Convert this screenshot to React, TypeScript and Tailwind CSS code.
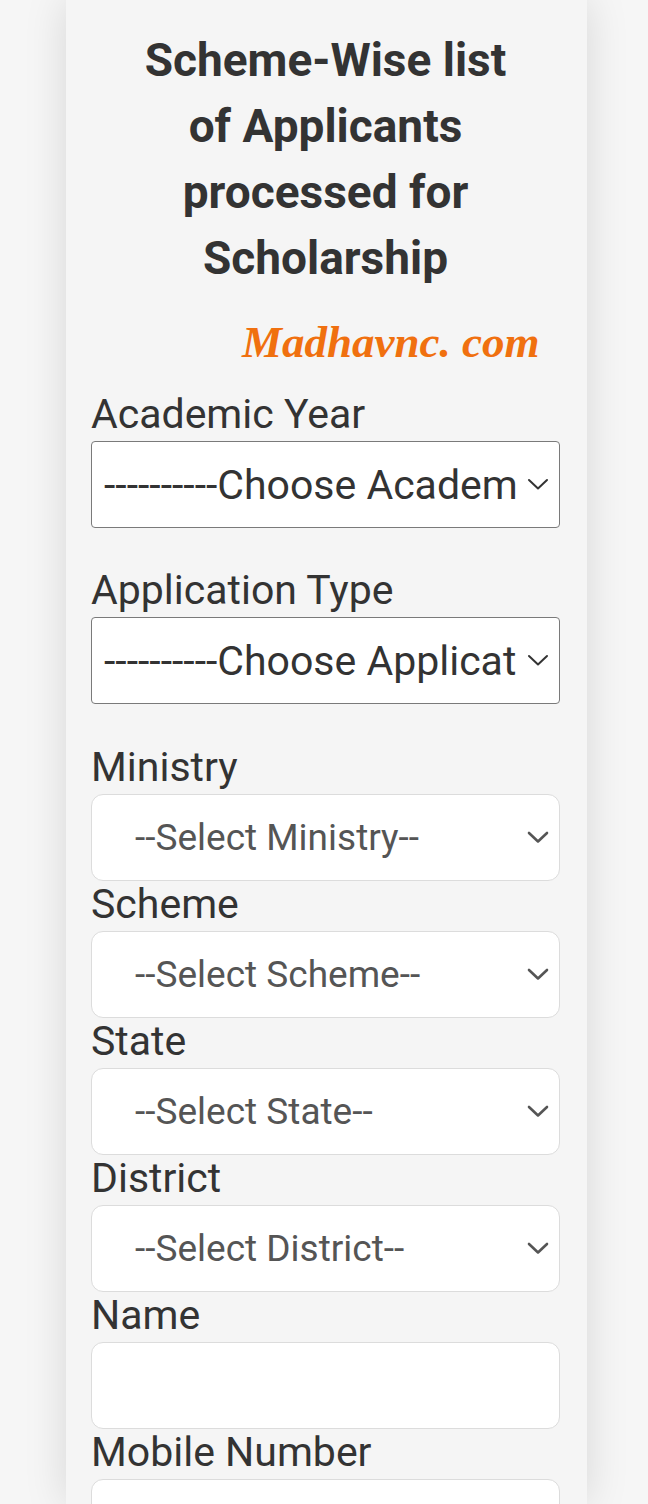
import React from 'react';

const Chevron: React.FC<{ light?: boolean }> = ({ light }) => (
  <svg
    width="22"
    height="13"
    viewBox="0 0 22 13"
    className="mr-[10px] shrink-0"
    fill="none"
    stroke={light ? '#555555' : '#333333'}
    strokeWidth={light ? 2.6 : 2}
    strokeLinecap="round"
    strokeLinejoin="round"
  >
    <polyline points="2,2 11,10.5 20,2" />
  </svg>
);

const DarkSelect: React.FC<{ text: string }> = ({ text }) => (
  <div className="mt-1 flex h-[87px] items-center rounded-[4px] border border-[#7a7a7a] bg-white">
    <div className="ml-[12px] mr-[11px] flex-1 overflow-hidden whitespace-nowrap text-[41px] leading-[48px] text-[#333]">{text}</div>
    <Chevron />
  </div>
);

const LightSelect: React.FC<{ text: string }> = ({ text }) => (
  <div className="mt-1 flex h-[87px] items-center rounded-[12px] border border-[#dcdcdc] bg-white">
    <div className="ml-[43px] flex-1 overflow-hidden whitespace-nowrap text-[37px] text-[#555]">{text}</div>
    <Chevron light />
  </div>
);

const Label: React.FC<{ children: React.ReactNode }> = ({ children }) => (
  <div className="text-[41px] leading-[46px] text-[#333]">{children}</div>
);

export default function App() {
  const selects = [
    { label: 'Ministry', text: '--Select Ministry--' },
    { label: 'Scheme', text: '--Select Scheme--' },
    { label: 'State', text: '--Select State--' },
    { label: 'District', text: '--Select District--' },
  ];

  return (
    <div className="h-[1504px] overflow-hidden bg-[#f6f6f6]" style={{ fontFamily: 'Roboto, "Noto Sans", sans-serif' }}>
      <div className="ml-[66px] h-[1504px] w-[521px] bg-[#f5f5f5] pl-[25px] pr-[27px] pt-[27px] shadow-[0_0_40px_rgba(0,0,0,0.13)]">
        <h1 className="text-center text-[46px] font-bold leading-[66px] text-[#333]">
          Scheme-Wise list
          <br />
          of Applicants
          <br />
          processed for
          <br />
          Scholarship
        </h1>

        <div className="h-[100px] pl-[151px] pt-[29px]">
          <div
            className="whitespace-nowrap text-[45px] font-bold italic leading-[45px] text-[#f0700f]"
            style={{ fontFamily: '"Liberation Serif", "DejaVu Serif", serif' }}
          >
            Madhavnc. com
          </div>
        </div>

        <div className="mb-[39px]">
          <Label>Academic Year</Label>
          <DarkSelect text="----------Choose Academic Year----------" />
        </div>

        <div className="mb-[40px]">
          <Label>Application Type</Label>
          <DarkSelect text="----------Choose Application Type----------" />
        </div>

        {selects.map((s) => (
          <div key={s.label}>
            <Label>{s.label}</Label>
            <LightSelect text={s.text} />
          </div>
        ))}

        <div>
          <Label>Name</Label>
          <div className="mt-1 h-[87px] rounded-[12px] border border-[#dcdcdc] bg-white" />
        </div>

        <div>
          <Label>Mobile Number</Label>
          <div className="mt-1 h-[87px] rounded-[12px] border border-[#dcdcdc] bg-white" />
        </div>
      </div>
    </div>
  );
}
